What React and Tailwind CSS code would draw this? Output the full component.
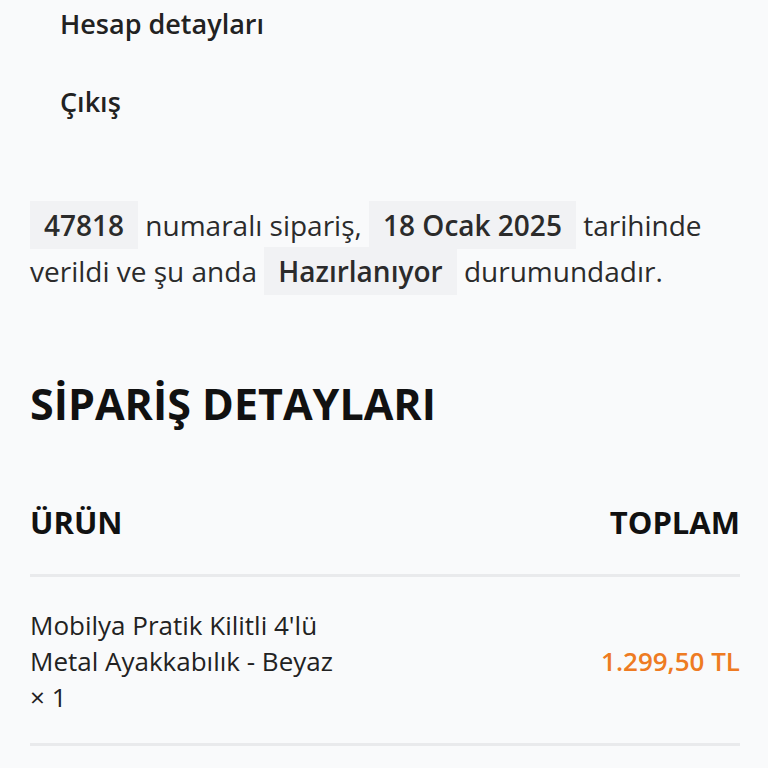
import React from 'react';

const order = {
    number: '47818',
    date: '18 Ocak 2025',
    status: 'Hazırlanıyor',
    items: [
        { name: "Mobilya Pratik Kilitli 4'lü Metal Ayakkabılık - Beyaz", qty: 1, total: '1.299,50 TL' },
    ],
};

const Mark = ({ children }) => (
    <mark className="bg-[#f1f2f4] text-[#2b2b2b] font-semibold px-[14px] py-[5px]">{children}</mark>
);

const App = () => {
    return (
        <div className="min-h-screen bg-[#f9fafb] text-[#2b2b2b] font-['Open_Sans',sans-serif] px-[30px] pr-[28px] overflow-hidden">
            {/* Hesap menüsü */}
            <ul className="-mt-[15px] pl-[30px]">
                <li className="py-[21px] text-[27px] leading-[36px] font-semibold text-[#222]">Hesap detayları</li>
                <li className="py-[21px] text-[27px] leading-[36px] font-semibold text-[#222]">Çıkış</li>
            </ul>

            <p className="mt-[61px] text-[28px] leading-[46px]">
                <Mark>{order.number}</Mark> numaralı sipariş, <Mark>{order.date}</Mark> tarihinde verildi ve şu anda <Mark>{order.status}</Mark> durumundadır.
            </p>

            <h2 className="mt-[84px] text-[43px] leading-[1.2] font-bold text-[#111]">SİPARİŞ DETAYLARI</h2>

            <div className="mt-[69px]">
                <div className="flex justify-between items-center pb-[29px] border-b-[3px] border-[#e9eaec] text-[31px] leading-[1.5] font-bold text-[#111]">
                    <span>ÜRÜN</span>
                    <span>TOPLAM</span>
                </div>
                {order.items.map((item, i) => (
                    <div key={i} className="flex justify-between items-center pt-[30px] pb-[28px] border-b-[3px] border-[#e9eaec] text-[26px] leading-[36px]">
                        <div className="w-[320px] text-[#222]">
                            {item.name} <span className="whitespace-nowrap">× {item.qty}</span>
                        </div>
                        <div className="font-semibold text-[#ee7b22]">{item.total}</div>
                    </div>
                ))}
            </div>
        </div>
    );
};

export default App;
